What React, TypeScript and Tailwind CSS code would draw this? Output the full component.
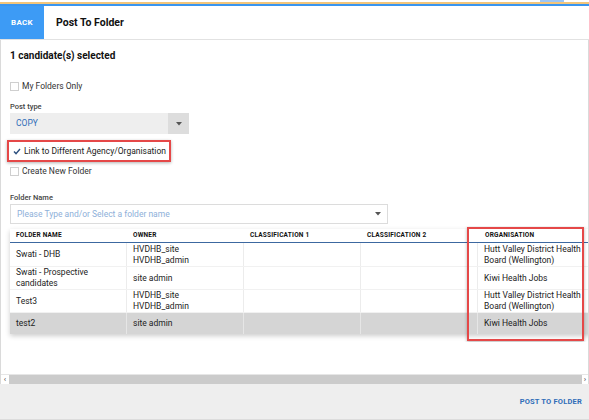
import React from 'react';

type Row = {
  name: string[];
  owner: string[];
  org: string[];
  h: string;
  selected?: boolean;
};

const rows: Row[] = [
  { name: ['Swati - DHB'], owner: ['HVDHB_site', 'HVDHB_admin'], org: ['Hutt Valley District Health', 'Board (Wellington)'], h: 'h-[24px]' },
  { name: ['Swati - Prospective', 'candidates'], owner: ['site admin'], org: ['Kiwi Health Jobs'], h: 'h-[23px]' },
  { name: ['Test3'], owner: ['HVDHB_site', 'HVDHB_admin'], org: ['Hutt Valley District Health', 'Board (Wellington)'], h: 'h-[23px]' },
  { name: ['test2'], owner: ['site admin'], org: ['Kiwi Health Jobs'], h: 'h-[21px]', selected: true },
];

function Checkbox({ checked }: { checked?: boolean }) {
  if (checked) {
    return (
      <span className="w-[9px] h-[9px] flex items-center justify-center">
        <svg width="8" height="7" viewBox="0 0 8 7">
          <path d="M1 3.6 L3 5.6 L7 1" fill="none" stroke="#2b4f7e" strokeWidth="1.4" />
        </svg>
      </span>
    );
  }
  return <span className="w-[9px] h-[9px] border border-[#cfcfcf] bg-white block" />;
}

function Caret({ color = '#555' }: { color?: string }) {
  return (
    <svg width="6" height="4" viewBox="0 0 6 4">
      <path d="M0 0 L6 0 L3 3.5 Z" fill={color} />
    </svg>
  );
}

function Cell({ lines, w, selected, last }: { lines: string[]; w: string; selected?: boolean; last?: boolean }) {
  return (
    <div
      className={`${w} shrink-0 flex flex-col justify-center pl-[6px] ${last ? '' : selected ? 'border-r border-[#e6e6e6]' : 'border-r border-[#ececec]'}`}
    >
      {lines.map((l) => (
        <span key={l} className="leading-[11px] whitespace-nowrap">
          {l}
        </span>
      ))}
    </div>
  );
}

export default function App() {
  return (
    <div className="w-[589px] h-[420px] relative overflow-hidden bg-white flex flex-col text-[#222] font-['Roboto','Noto_Sans',sans-serif]">
      {/* top strip */}
      <div className="h-[2px] flex">
        <div className="ml-[540px] w-[24px] bg-[#9cc6f5]" />
      </div>
      <div className="h-[2px] bg-[#f3c57a]" />
      <div className="h-[2px] bg-[#3a95ef]" />

      {/* header */}
      <div className="h-[34px] flex items-stretch border-b border-[#e2e2e2]">
        <div className="w-[44px] bg-[#3d9bf5] text-white text-[8px] font-bold flex items-center justify-center tracking-[0.3px]">
          BACK
        </div>
        <div className="ml-[12px] flex items-center text-[10.5px] font-bold text-[#111]">Post To Folder</div>
      </div>

      {/* body */}
      <div className="flex-1 flex flex-col border-l border-[#dadada] border-r">
        <div className="px-[9px] flex flex-col">
          <div className="pt-[9px] text-[10px] font-bold leading-[14px] text-[#111]">1 candidate(s) selected</div>

          <label className="mt-[17px] h-[12px] flex items-center gap-[3px] text-[8.5px] text-[#333]">
            <Checkbox />
            <span>My Folders Only</span>
          </label>

          <div className="mt-[9px] text-[7.5px] leading-[11px] font-medium text-[#444]">Post type</div>
          <div className="mt-[1px] w-[179px] h-[21px] flex bg-[#eeeeee]">
            <div className="flex-1 flex items-center pl-[6px] text-[8.5px] text-[#2f6db8]">COPY</div>
            <div className="w-[21px] bg-[#dddddd] flex items-center justify-center">
              <Caret color="#555" />
            </div>
          </div>

          <div className="mt-[6px] ml-[-3px] w-[164px] h-[22px] px-[3px] flex items-center gap-[3px] border-2 border-[#e54848] shadow-[0_1px_3px_rgba(0,0,0,0.3)] text-[8.5px] text-[#222]">
            <Checkbox checked />
            <span className="whitespace-nowrap">Link to Different Agency/Organisation</span>
          </div>

          <label className="mt-[3px] h-[12px] flex items-center gap-[3px] text-[8.5px] text-[#333]">
            <Checkbox />
            <span>Create New Folder</span>
          </label>

          <div className="mt-[15px] text-[7.5px] leading-[11px] font-medium text-[#444]">Folder Name</div>
          <div className="mt-[1px] w-[378px] h-[20px] border border-[#dcdcdc] flex items-center justify-between pl-[6px] pr-[6px]">
            <span className="text-[8.5px] text-[#8eb0d9]">Please Type and/or Select a folder name</span>
            <Caret color="#555" />
          </div>
        </div>

        {/* table */}
        <div className="mt-[2px] pt-[3px] pb-[8px] pl-[9px] overflow-hidden">
          <div className="relative w-[600px]">
            <div className="bg-white shadow-[0_2px_5px_rgba(0,0,0,0.2)] text-[8.5px] text-[#222]">
              <div className="h-[14px] flex items-center border-b border-[#3c68a0] text-[6.5px] font-bold text-[#111] tracking-[0.2px]">
                <div className="w-[117px] pl-[6px]">FOLDER NAME</div>
                <div className="w-[117px] pl-[6px]">OWNER</div>
                <div className="w-[117px] pl-[6px]">CLASSIFICATION 1</div>
                <div className="w-[117px] pl-[6px]">CLASSIFICATION 2</div>
                <div className="flex-1 pl-[7px]">ORGANISATION</div>
              </div>
              {rows.map((r, i) => (
                <div
                  key={i}
                  className={`${r.h} flex ${r.selected ? 'bg-[#d5d5d5]' : 'bg-white border-b border-[#f1f1f1]'}`}
                >
                  <Cell lines={r.name} w="w-[117px]" selected={r.selected} />
                  <Cell lines={r.owner} w="w-[117px]" selected={r.selected} />
                  <Cell lines={[]} w="w-[117px]" selected={r.selected} />
                  <Cell lines={[]} w="w-[117px]" selected={r.selected} />
                  <Cell lines={r.org} w="flex-1" selected={r.selected} last />
                </div>
              ))}
            </div>
            {/* annotation box */}
            <div className="absolute left-[457px] top-[-2px] w-[117px] h-[114px] border-2 border-[#e54848] shadow-[0_1px_3px_rgba(0,0,0,0.3)]" />
          </div>
        </div>

        <div className="flex-1" />

        {/* scrollbar */}
        <div className="h-[10px] flex items-center border-t border-[#e6e6e6]">
          <span className="w-[8px] text-[8px] leading-none text-[#444] text-center">‹</span>
          <div className="flex-1 h-[9px] bg-[#cbcbcb]" />
          <span className="w-[6px] text-[8px] leading-none text-[#444] text-center">›</span>
        </div>
      </div>

      {/* footer */}
      <div className="h-[36px] bg-[#eeeeee] flex items-center justify-end pr-[7px] border-b border-[#dcdcdc]">
        <span className="text-[7.5px] font-bold text-[#2f6db8] tracking-[0.2px]">POST TO FOLDER</span>
      </div>
    </div>
  );
}
